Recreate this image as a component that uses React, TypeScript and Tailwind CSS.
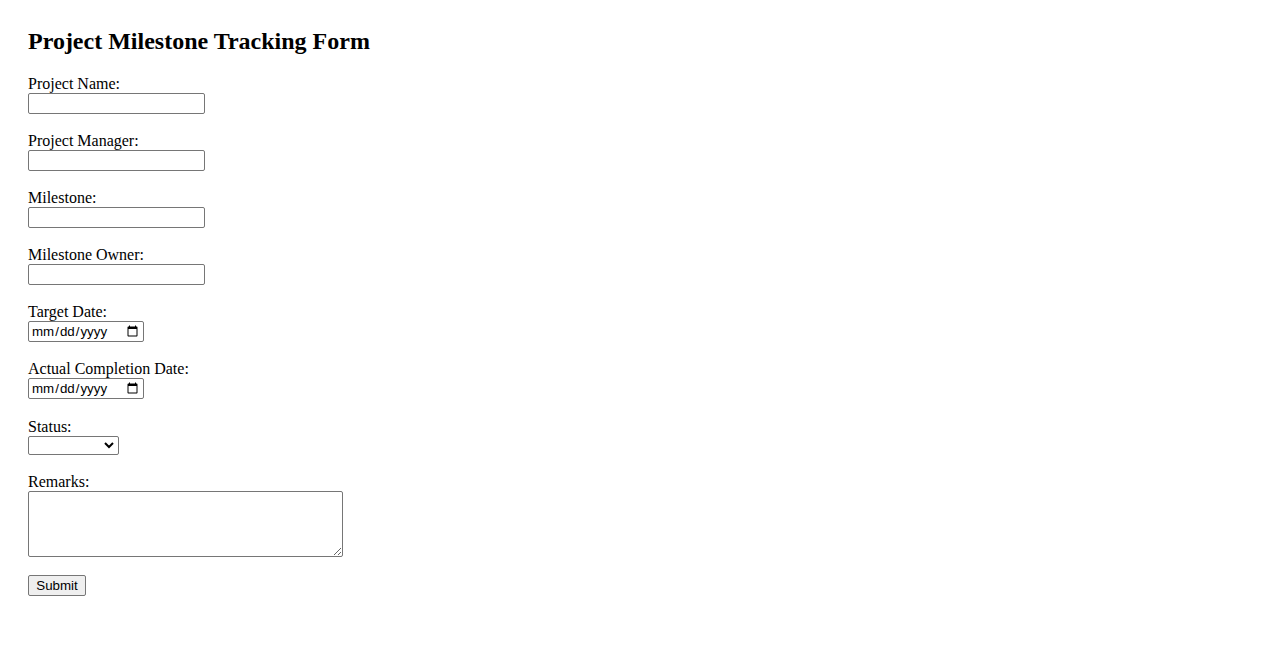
import React from "react";

const fields = [
	{ id: "projectName", label: "Project Name:" },
	{ id: "projectManager", label: "Project Manager:" },
	{ id: "milestone", label: "Milestone:" },
	{ id: "milestoneOwner", label: "Milestone Owner:" },
];

const control =
	"block border border-[#767676] rounded-[2px] bg-white text-[13.33px] font-['Liberation_Sans',Arial,sans-serif] text-black";

const App = () => {
	return (
		<div className="min-h-[650px] bg-white px-[28px] pt-[27px] font-['Liberation_Serif','Times_New_Roman',serif] text-black text-[16px]">
			<h2 className="text-[24px] font-bold leading-[28px] mb-[20px]">
				Project Milestone Tracking Form
			</h2>
			<form className="flex flex-col items-start">
				{fields.map((f) => (
					<div key={f.id} className="mb-[18px]">
						<label htmlFor={f.id} className="block leading-[18px]">
							{f.label}
						</label>
						<input id={f.id} type="text" className={`${control} w-[177px] h-[21px] px-[2px]`} />
					</div>
				))}

				<div className="mb-[18px]">
					<label htmlFor="targetDate" className="block leading-[18px]">
						Target Date:
					</label>
					<input id="targetDate" type="date" className={`${control} w-[116px] h-[21px] px-[2px]`} />
				</div>

				<div className="mb-[19px]">
					<label htmlFor="actualDate" className="block leading-[18px]">
						Actual Completion Date:
					</label>
					<input id="actualDate" type="date" className={`${control} w-[116px] h-[21px] px-[2px]`} />
				</div>

				<div className="mb-[18px]">
					<label htmlFor="status" className="block leading-[18px]">
						Status:
					</label>
					<div className="relative w-[91px] h-[19px]">
						<select id="status" className={`${control} appearance-none w-[91px] h-[19px]`}>
							<option value=""></option>
							<option>Not Started</option>
							<option>In Progress</option>
							<option>Completed</option>
							<option>Delayed</option>
						</select>
						<svg
							className="absolute right-[5px] top-[5px] pointer-events-none"
							width="10"
							height="8"
							viewBox="0 0 10 8"
						>
							<path d="M1 2 L5 6 L9 2" fill="none" stroke="#000" strokeWidth="2" />
						</svg>
					</div>
				</div>

				<div className="mb-[18px]">
					<label htmlFor="remarks" className="block leading-[18px]">
						Remarks:
					</label>
					<textarea id="remarks" className={`${control} w-[315px] h-[66px] p-[2px]`} />
				</div>

				<button
					type="submit"
					className="w-[58px] h-[21px] border border-[#767676] rounded-[2px] bg-[#efefef] text-[13.33px] font-['Liberation_Sans',Arial,sans-serif] text-black leading-none"
				>
					Submit
				</button>
			</form>
		</div>
	);
};

export default App;
